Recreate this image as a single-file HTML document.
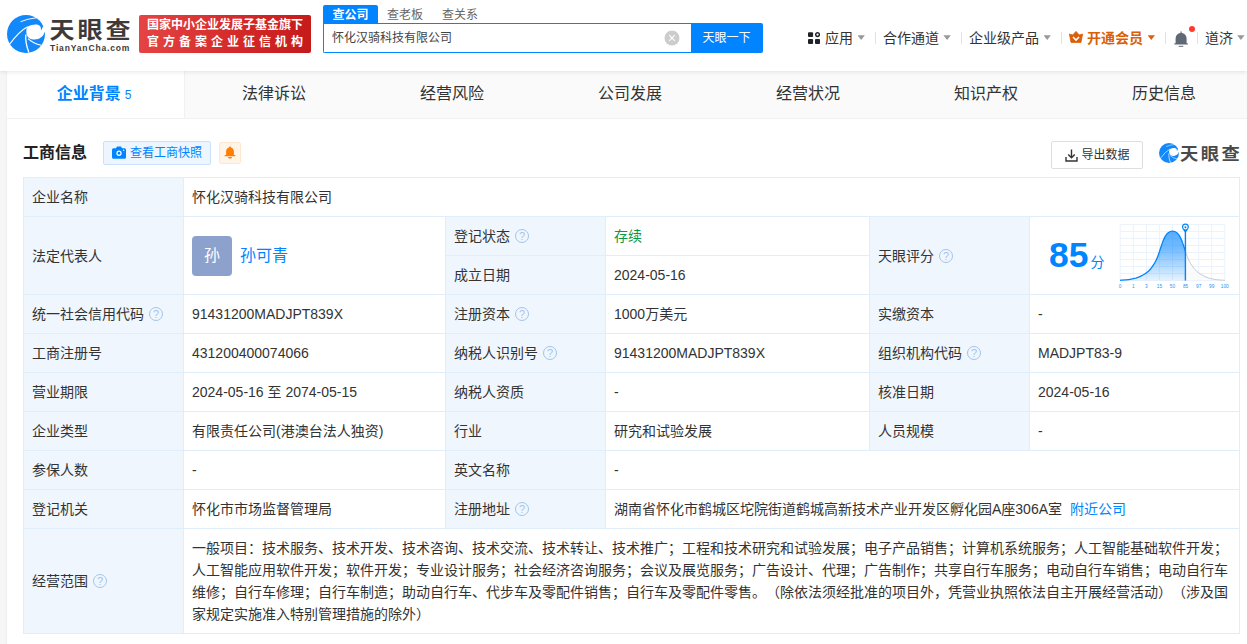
<!DOCTYPE html>
<html lang="zh-CN">
<head>
<meta charset="utf-8">
<title>怀化汉骑科技有限公司 - 天眼查</title>
<style>
*{box-sizing:border-box;margin:0;padding:0}
html,body{width:1247px;height:644px;overflow:hidden}
body{text-spacing-trim:space-all;background:#f6f6f6;font-family:"Liberation Sans","Noto Sans CJK SC",sans-serif;font-size:14px;color:#333;position:relative}
a{text-decoration:none;color:#0084ff}
.abs{position:absolute}
/* header */
#hd{position:absolute;left:0;top:0;width:1247px;height:71px;background:#fff;box-shadow:0 1px 4px rgba(0,0,0,.1);z-index:5}
#logo-ico{position:absolute;left:7px;top:15px;width:38px;height:38px}
#logo-cn{position:absolute;left:49.500px;top:12px;font-size:25px;line-height:36px;font-weight:700;color:#3e3a39;letter-spacing:3px;white-space:nowrap;transform:scaleY(.9);transform-origin:0 50%}
#logo-en{position:absolute;left:50px;top:42.500px;font-size:8.500px;line-height:10px;font-weight:700;color:#3e3a39;letter-spacing:.85px;white-space:nowrap}
#badge{position:absolute;left:139px;top:15px;width:172px;height:38px;border-radius:2px;background:linear-gradient(100deg,#e64545 0%,#d42a2a 55%,#c41a1a 100%);color:#fff;font-weight:700;font-size:12px;line-height:17px;padding:1.500px 0 0 8px;white-space:nowrap}
#badge .l2{letter-spacing:4px;display:block}
#stabs{position:absolute;left:323px;top:5px;height:17px;font-size:12px;line-height:20px;white-space:nowrap;color:#666}
#stabs span{position:absolute;top:0;height:17px}
#stabs .on{left:0;width:55px;height:18px;background:#0084ff;color:#fff;font-weight:700;text-align:center;border-radius:2px 2px 0 0}
#sbox{position:absolute;left:323px;top:23px;width:369px;height:30px;border:1px solid #0084ff;border-right:none;border-radius:0 0 0 2px;background:#fff;font-size:12px;line-height:29px;padding-left:8px;color:#444}
#sclr{position:absolute;left:664px;top:30px;width:16px;height:16px}
#sbtn{position:absolute;left:691px;top:23px;width:72px;height:30px;background:#0084ff;color:#fff;font-size:12px;line-height:30.500px;text-align:center;border-radius:0 2px 2px 0;padding-right:1px}
.nv{position:absolute;top:28px;height:21px;line-height:21px;font-size:14px;color:#333;white-space:nowrap}
.sep{position:absolute;top:32px;width:1px;height:12px;background:#dfe2e6}
.arr{position:absolute;top:35.3px;width:7.4px;height:4.6px;background:#999;clip-path:polygon(0 0,100% 0,50% 100%)}
/* tabs */
#wrap{position:absolute;left:7px;top:71px;width:1248px;height:600px;background:#fff;box-shadow:-1px 0 0 #efefef}
#tabs{position:absolute;left:0;top:0;width:1248px;height:48px;background:#fafafa;border-bottom:1px solid #f1f1f1}
.tab{position:absolute;top:0;height:47px;line-height:45px;font-size:16px;color:#333;text-align:center;width:178px}
.tab.on{background:#fff;color:#0084ff;font-weight:700;border-right:1px solid #f0f0f0;height:47px}
.tab.on small{font-size:12px;font-weight:400;margin-left:4px}
/* section head */
#ttl{position:absolute;left:16px;top:69.500px;font-size:16px;line-height:24px;font-weight:700;color:#222}
#snap{position:absolute;left:96px;top:70px;width:108px;height:24px;border:1px solid #c9e1fd;background:#edf5ff;border-radius:2px;color:#0084ff;font-size:12px;line-height:22.500px;padding-left:26px;white-space:nowrap}
#snap svg{position:absolute;left:8px;top:4px}
#bell{position:absolute;left:212px;top:71px;width:22px;height:22px;border:1px solid #ffe6cc;background:#fff4e8;border-radius:2.500px}
#exp{position:absolute;left:1044px;top:70px;width:92px;height:28px;border:1px solid #dedede;border-radius:2px;font-size:12px;line-height:27px;color:#333;padding-left:29.5px;white-space:nowrap;background:#fff}
#wm{position:absolute;left:1152px;top:70px;width:82px;height:24px}
/* table */
table{position:absolute;left:16px;top:106px;width:1216px;border-collapse:collapse;table-layout:fixed;font-size:14px;color:#333}
td{border:1px solid #e0edfa;height:39px;padding:0 8px;vertical-align:middle;line-height:22px;white-space:nowrap;overflow:hidden}
td.k{background:#f0f6fd}
.q{display:inline-block;width:14px;height:14px;border:1px solid #a4c4ea;border-radius:50%;color:#a4c4ea;font-size:11px;font-style:normal;line-height:12.500px;text-align:center;vertical-align:1px;margin-left:5px;font-family:"Liberation Sans",sans-serif}
.green{color:#089944}
#score{padding:0}
#sc{display:block}
#scope{white-space:normal;line-height:22px;padding:8px 8px 8px 8px}
.ava{display:inline-block;width:40px;height:40px;border-radius:4px;background:#8ca2cd;color:#fff;font-size:16px;line-height:40px;text-align:center;vertical-align:middle;margin-right:8px}
.nm{font-size:16px;color:#0084ff;vertical-align:middle}
</style>
</head>
<body>
<div id="hd">
  <svg id="logo-ico" viewBox="0 0 38 38">
    <circle cx="19" cy="19" r="19" fill="#1388fa"/>
    <path d="M20.100 11.900C24 9.800 28 9.200 31 9.800C33.500 10.500 34.400 13 33.800 15.700Q35.200 13.800 36 11.500L40 11L40 17.200L37.600 17.100C36.500 22 31 25.800 24.700 24.200C22.500 23.600 21 22.500 20.300 21C19 18.500 19 15 20.100 11.900Z" fill="#fff"/>
    <path d="M20.600 11.700Q12.100 16.200 2.800 29" fill="none" stroke="#fff" stroke-width="1.200"/>
    <path d="M18.900 19.500C18.300 24.700 19 30 21.900 37.600" fill="none" stroke="#fff" stroke-width="1.300"/>
    <path d="M21 23.600Q26.200 28.600 34.200 30.300" fill="none" stroke="#fff" stroke-width="1.100"/>
    <path d="M13.600 6.700Q20.200 3.700 30.200 2.700" fill="none" stroke="#fff" stroke-width=".95"/>
  </svg>
  <div id="logo-cn">天眼查</div>
  <div id="logo-en">TianYanCha.com</div>
  <div id="badge">国家中小企业发展子基金旗下<span class="l2">官方备案企业征信机构</span></div>
  <div id="stabs"><span class="on">查公司</span><span style="left:64px">查老板</span><span style="left:119px">查关系</span></div>
  <div id="sbox">怀化汉骑科技有限公司</div>
  <svg id="sclr" viewBox="0 0 16 16"><circle cx="8" cy="8" r="7.5" fill="#ccc"/><path d="M5.2 5.2L10.8 10.8M10.8 5.2L5.2 10.8" stroke="#fff" stroke-width="1.1"/></svg>
  <div id="sbtn">天眼一下</div>

  <svg class="abs" style="left:808px;top:32px" width="12.200" height="12" viewBox="0 0 12.200 12"><rect x="0" y=".2" width="5.100" height="4.700" rx="1" fill="#1f2329"/><rect x="0" y="7" width="5.100" height="4.900" rx="1" fill="#1f2329"/><rect x="7" y="7" width="5.100" height="4.900" rx="1" fill="#1f2329"/><circle cx="9.550" cy="2.600" r="1.850" fill="none" stroke="#1f2329" stroke-width="1.400"/></svg>
  <div class="nv" style="left:825px">应用</div><i class="arr" style="left:857.5px"></i>
  <i class="sep" style="left:875px"></i>
  <div class="nv" style="left:883px">合作通道</div><i class="arr" style="left:943.4px"></i>
  <i class="sep" style="left:961px"></i>
  <div class="nv" style="left:969px">企业级产品</div><i class="arr" style="left:1043.5px"></i>
  <i class="sep" style="left:1061px"></i>
  <svg class="abs" style="left:1069px;top:31.200px" width="14" height="12" viewBox="0 0 14 12"><path d="M.4 3L3.700 4 7 .4 10.300 4 13.600 3 12 11.400H2Z" fill="#d9600b" stroke="#d9600b" stroke-width=".8" stroke-linejoin="round"/><path d="M4 6L7 9.100 10 6" fill="none" stroke="#fff" stroke-width="1.500"/></svg>
  <div class="nv" style="left:1087px;color:#d9600b;font-weight:700">开通会员</div><i class="arr" style="left:1147.6px;background:#d9600b"></i>
  <i class="sep" style="left:1165px"></i>
  <svg class="abs" style="left:1174.300px;top:30.700px" width="14" height="16.500" viewBox="0 0 14 16.500"><path d="M7.100 .3Q7.700 .3 7.700 .9V2C10.600 2.400 12.600 4.600 12.600 7.400V12.200H13.500Q13.900 12.200 13.900 12.800Q13.900 13.400 13.500 13.400H.7Q.3 13.400 .3 12.800Q.3 12.200 .7 12.200H1.600V7.400C1.600 4.600 3.600 2.400 6.500 2V.9Q6.500 .3 7.100 .3Z" fill="#5f6875"/><rect x="4.700" y="14.700" width="4.600" height="1.300" rx=".3" fill="#7f8791"/></svg>
  <i class="abs" style="left:1189px;top:25.900px;width:6px;height:6px;border-radius:50%;background:#ff3b30"></i>
  <i class="sep" style="left:1197px"></i>
  <div class="nv" style="left:1205px">道济</div><i class="arr" style="left:1237.2px"></i>
</div>

<div id="wrap">
  <div id="tabs">
    <div class="tab on" style="left:0;width:178px;padding-right:3px">企业背景<small>5</small></div>
    <div class="tab" style="left:178px">法律诉讼</div>
    <div class="tab" style="left:356px">经营风险</div>
    <div class="tab" style="left:534px">公司发展</div>
    <div class="tab" style="left:712px">经营状况</div>
    <div class="tab" style="left:890px">知识产权</div>
    <div class="tab" style="left:1068px">历史信息</div>
  </div>

  <div id="ttl">工商信息</div>
  <div id="snap"><svg width="14" height="12.800" viewBox="0 0 14 12" preserveAspectRatio="none"><path d="M1.500 2H4L5 .500H9L10 2H12.500A1.500 1.500 0 0 1 14 3.500V10.500A1.500 1.500 0 0 1 12.500 12H1.500A1.500 1.500 0 0 1 0 10.500V3.500A1.500 1.500 0 0 1 1.500 2Z" fill="#0084ff"/><circle cx="7" cy="6.800" r="2.600" fill="#fff"/><circle cx="7" cy="6.800" r="1.300" fill="#0084ff"/><circle cx="11.700" cy="4" r=".7" fill="#fff"/></svg>查看工商快照</div>
  <div id="bell"><svg width="20" height="20" viewBox="0 0 20 20"><path d="M10 3.600C10.600 3.600 11 4 11 4.500C12.800 5 13.900 6.600 13.900 8.600V12.100H15.100Q15.400 12.100 15.400 12.600Q15.400 13.200 15.100 13.200H4.900Q4.600 13.200 4.600 12.600Q4.600 12.100 4.900 12.100H6.100V8.600C6.100 6.600 7.200 5 9 4.500C9 4 9.400 3.600 10 3.600Z" fill="#ff7d00"/><path d="M8 13.900H12A2 1.600 0 0 1 8 13.900Z" fill="#ff7d00"/></svg></div>
  <div id="exp"><svg class="abs" style="left:12.500px;top:6.500px" width="13" height="13" viewBox="0 0 13 13" fill="none" stroke="#333" stroke-width="1.400"><path d="M6.500 .500V8.500M3.200 5.500L6.500 8.700 9.800 5.500M1 8V12H12V8"/></svg>导出数据</div>
  <div id="wm">
    <svg class="abs" style="left:0;top:2px" width="20" height="20" viewBox="0 0 38 38">
      <circle cx="19" cy="19" r="19" fill="#1388fa"/>
    <path d="M20.100 11.900C24 9.800 28 9.200 31 9.800C33.500 10.500 34.400 13 33.800 15.700Q35.200 13.800 36 11.500L40 11L40 17.200L37.600 17.100C36.500 22 31 25.800 24.700 24.200C22.500 23.600 21 22.500 20.300 21C19 18.500 19 15 20.100 11.900Z" fill="#fff"/>
    <path d="M20.600 11.700Q12.100 16.200 2.800 29" fill="none" stroke="#fff" stroke-width="1.200"/>
    <path d="M18.900 19.500C18.300 24.700 19 30 21.900 37.600" fill="none" stroke="#fff" stroke-width="1.300"/>
    <path d="M21 23.600Q26.200 28.600 34.200 30.300" fill="none" stroke="#fff" stroke-width="1.100"/>
    <path d="M13.600 6.700Q20.200 3.700 30.200 2.700" fill="none" stroke="#fff" stroke-width=".95"/>
    </svg>
    <span class="abs" style="left:21px;top:2px;font-size:17px;line-height:24px;font-weight:700;color:#4a4a4a;white-space:nowrap;letter-spacing:2.300px;transform:scaleX(1.075);transform-origin:0 0">天眼查</span>
  </div>

  <table>
    <colgroup><col style="width:160px"><col style="width:262px"><col style="width:160px"><col style="width:264px"><col style="width:160px"><col style="width:210px"></colgroup>
    <tr><td class="k">企业名称</td><td colspan="5">怀化汉骑科技有限公司</td></tr>
    <tr><td class="k" rowspan="2">法定代表人</td><td rowspan="2"><span class="ava">孙</span><a class="nm">孙可青</a></td><td class="k">登记状态<i class="q">?</i></td><td class="green">存续</td><td class="k" rowspan="2">天眼评分<i class="q">?</i></td><td rowspan="2" id="score"><svg id="sc" width="208" height="76" viewBox="0 0 208 76">
<defs><linearGradient id="g1" x1="0" y1="0" x2="0" y2="1"><stop offset="0" stop-color="#0084ff" stop-opacity=".66"/><stop offset=".35" stop-color="#0084ff" stop-opacity=".55"/><stop offset="1" stop-color="#0084ff" stop-opacity=".1"/></linearGradient>
<clipPath id="cl"><rect x="80" y="0" width="75.400" height="76"/></clipPath><clipPath id="cr"><rect x="155.400" y="0" width="60" height="76"/></clipPath></defs>
<text x="19" y="49.300" font-family="Liberation Sans,sans-serif" font-size="35.400" font-weight="700" fill="#0084ff">85</text>
<text x="60.500" y="49" font-family="Liberation Sans,Noto Sans CJK SC,sans-serif" font-size="14" fill="#0084ff">分</text>
<path d="M90.2 6.4V62.5M103.3 6.4V62.5M116.4 6.4V62.5M129.4 6.4V62.5M142.5 6.4V62.5M155.6 6.4V62.5M168.7 6.4V62.5M181.7 6.4V62.5M194.8 6.4V62.5M90.2 6.4H194.8M90.2 13.4H194.8M90.2 20.4H194.8M90.2 27.4H194.8M90.2 34.5H194.8M90.2 41.5H194.8M90.2 48.5H194.8M90.2 55.5H194.8M90.2 62.5H194.8" stroke="#eaf2fb" stroke-width="1" fill="none"/>
<g clip-path="url(#cr)"><path d="M90.0 62.3 C91.5 62.2 96.3 62.0 98.9 61.6 C101.6 61.3 103.8 60.8 105.9 60.2 C108.1 59.5 110.0 58.6 111.8 57.7 C113.6 56.7 115.3 55.7 116.8 54.5 C118.3 53.3 119.5 52.2 120.8 50.7 C122.0 49.2 123.3 47.3 124.3 45.7 C125.3 44.0 126.1 42.5 126.8 40.8 C127.5 39.2 128.1 37.6 128.7 35.8 C129.4 34.0 130.0 31.8 130.7 29.8 C131.4 27.8 132.0 25.8 132.7 23.9 C133.5 22.0 134.3 19.9 135.2 18.4 C136.1 16.9 137.0 15.6 138.2 14.7 C139.4 13.8 141.1 13.2 142.5 13.2 C143.9 13.2 145.6 13.8 146.8 14.7 C148.0 15.6 148.9 16.9 149.8 18.4 C150.7 19.9 151.5 22.0 152.3 23.9 C153.0 25.8 153.6 27.8 154.3 29.8 C155.0 31.8 155.6 34.0 156.3 35.8 C156.9 37.6 157.5 39.2 158.2 40.8 C158.9 42.5 159.7 44.0 160.7 45.7 C161.7 47.3 163.0 49.2 164.2 50.7 C165.5 52.2 166.7 53.3 168.2 54.5 C169.7 55.7 171.4 56.7 173.2 57.7 C175.0 58.6 176.9 59.5 179.1 60.2 C181.2 60.8 183.4 61.3 186.1 61.6 C188.7 62.0 193.5 62.2 195.0 62.3 Z" fill="#fafafa" fill-opacity=".8"/><path d="M90.0 62.3 C91.5 62.2 96.3 62.0 98.9 61.6 C101.6 61.3 103.8 60.8 105.9 60.2 C108.1 59.5 110.0 58.6 111.8 57.7 C113.6 56.7 115.3 55.7 116.8 54.5 C118.3 53.3 119.5 52.2 120.8 50.7 C122.0 49.2 123.3 47.3 124.3 45.7 C125.3 44.0 126.1 42.5 126.8 40.8 C127.5 39.2 128.1 37.6 128.7 35.8 C129.4 34.0 130.0 31.8 130.7 29.8 C131.4 27.8 132.0 25.8 132.7 23.9 C133.5 22.0 134.3 19.9 135.2 18.4 C136.1 16.9 137.0 15.6 138.2 14.7 C139.4 13.8 141.1 13.2 142.5 13.2 C143.9 13.2 145.6 13.8 146.8 14.7 C148.0 15.6 148.9 16.9 149.8 18.4 C150.7 19.9 151.5 22.0 152.3 23.9 C153.0 25.8 153.6 27.8 154.3 29.8 C155.0 31.8 155.6 34.0 156.3 35.8 C156.9 37.6 157.5 39.2 158.2 40.8 C158.9 42.5 159.7 44.0 160.7 45.7 C161.7 47.3 163.0 49.2 164.2 50.7 C165.5 52.2 166.7 53.3 168.2 54.5 C169.7 55.7 171.4 56.7 173.2 57.7 C175.0 58.6 176.9 59.5 179.1 60.2 C181.2 60.8 183.4 61.3 186.1 61.6 C188.7 62.0 193.5 62.2 195.0 62.3" fill="none" stroke="#c4cbd3" stroke-width="1"/></g>
<g clip-path="url(#cl)"><path d="M90.0 62.3 C91.5 62.2 96.3 62.0 98.9 61.6 C101.6 61.3 103.8 60.8 105.9 60.2 C108.1 59.5 110.0 58.6 111.8 57.7 C113.6 56.7 115.3 55.7 116.8 54.5 C118.3 53.3 119.5 52.2 120.8 50.7 C122.0 49.2 123.3 47.3 124.3 45.7 C125.3 44.0 126.1 42.5 126.8 40.8 C127.5 39.2 128.1 37.6 128.7 35.8 C129.4 34.0 130.0 31.8 130.7 29.8 C131.4 27.8 132.0 25.8 132.7 23.9 C133.5 22.0 134.3 19.9 135.2 18.4 C136.1 16.9 137.0 15.6 138.2 14.7 C139.4 13.8 141.1 13.2 142.5 13.2 C143.9 13.2 145.6 13.8 146.8 14.7 C148.0 15.6 148.9 16.9 149.8 18.4 C150.7 19.9 151.5 22.0 152.3 23.9 C153.0 25.8 153.6 27.8 154.3 29.8 C155.0 31.8 155.6 34.0 156.3 35.8 C156.9 37.6 157.5 39.2 158.2 40.8 C158.9 42.5 159.7 44.0 160.7 45.7 C161.7 47.3 163.0 49.2 164.2 50.7 C165.5 52.2 166.7 53.3 168.2 54.5 C169.7 55.7 171.4 56.7 173.2 57.7 C175.0 58.6 176.9 59.5 179.1 60.2 C181.2 60.8 183.4 61.3 186.1 61.6 C188.7 62.0 193.5 62.2 195.0 62.3 Z" fill="url(#g1)"/><path d="M90.0 62.3 C91.5 62.2 96.3 62.0 98.9 61.6 C101.6 61.3 103.8 60.8 105.9 60.2 C108.1 59.5 110.0 58.6 111.8 57.7 C113.6 56.7 115.3 55.7 116.8 54.5 C118.3 53.3 119.5 52.2 120.8 50.7 C122.0 49.2 123.3 47.3 124.3 45.7 C125.3 44.0 126.1 42.5 126.8 40.8 C127.5 39.2 128.1 37.6 128.7 35.8 C129.4 34.0 130.0 31.8 130.7 29.8 C131.4 27.8 132.0 25.8 132.7 23.9 C133.5 22.0 134.3 19.9 135.2 18.4 C136.1 16.9 137.0 15.6 138.2 14.7 C139.4 13.8 141.1 13.2 142.5 13.2 C143.9 13.2 145.6 13.8 146.8 14.7 C148.0 15.6 148.9 16.9 149.8 18.4 C150.7 19.9 151.5 22.0 152.3 23.9 C153.0 25.8 153.6 27.8 154.3 29.8 C155.0 31.8 155.6 34.0 156.3 35.8 C156.9 37.6 157.5 39.2 158.2 40.8 C158.9 42.5 159.7 44.0 160.7 45.7 C161.7 47.3 163.0 49.2 164.2 50.7 C165.5 52.2 166.7 53.3 168.2 54.5 C169.7 55.7 171.4 56.7 173.2 57.7 C175.0 58.6 176.9 59.5 179.1 60.2 C181.2 60.8 183.4 61.3 186.1 61.6 C188.7 62.0 193.5 62.2 195.0 62.3" fill="none" stroke="#0084ff" stroke-width="1.300"/></g>
<path d="M155.400 13V62.600" stroke="#0084ff" stroke-width="1.400"/>
<path d="M155.400 15.200C154.400 13 151.900 11.400 151.900 9.100a3.500 3.500 0 0 1 7 0C158.900 11.400 156.400 13 155.400 15.200Z" fill="#0084ff"/>
<circle cx="155.400" cy="9.100" r="2.300" fill="#fff"/><circle cx="155.400" cy="9.200" r="1.050" fill="#0084ff"/>
<g transform="translate(0 70) scale(.5)" font-family="Liberation Sans,sans-serif" font-size="9.500" fill="#2b92fb"><text x="180.4" y="0" text-anchor="middle">0</text><text x="206.6" y="0" text-anchor="middle">1</text><text x="232.7" y="0" text-anchor="middle">3</text><text x="258.9" y="0" text-anchor="middle">15</text><text x="285.0" y="0" text-anchor="middle">50</text><text x="311.1" y="0" text-anchor="middle">85</text><text x="337.3" y="0" text-anchor="middle">97</text><text x="363.5" y="0" text-anchor="middle">99</text><text x="389.6" y="0" text-anchor="middle">100</text></g>
</svg></td></tr>
    <tr><td class="k">成立日期</td><td>2024-05-16</td></tr>
    <tr><td class="k">统一社会信用代码<i class="q">?</i></td><td>91431200MADJPT839X</td><td class="k">注册资本<i class="q">?</i></td><td>1000万美元</td><td class="k">实缴资本</td><td>-</td></tr>
    <tr><td class="k">工商注册号</td><td>431200400074066</td><td class="k">纳税人识别号<i class="q">?</i></td><td>91431200MADJPT839X</td><td class="k">组织机构代码<i class="q">?</i></td><td>MADJPT83-9</td></tr>
    <tr><td class="k">营业期限</td><td>2024-05-16 至 2074-05-15</td><td class="k">纳税人资质</td><td>-</td><td class="k">核准日期</td><td>2024-05-16</td></tr>
    <tr><td class="k">企业类型</td><td>有限责任公司(港澳台法人独资)</td><td class="k">行业</td><td>研究和试验发展</td><td class="k">人员规模</td><td>-</td></tr>
    <tr><td class="k">参保人数</td><td>-</td><td class="k">英文名称</td><td colspan="3">-</td></tr>
    <tr><td class="k">登记机关</td><td>怀化市市场监督管理局</td><td class="k">注册地址<i class="q">?</i></td><td colspan="3">湖南省怀化市鹤城区坨院街道鹤城高新技术产业开发区孵化园A座306A室 <a style="margin-left:4px">附近公司</a></td></tr>
    <tr><td class="k">经营范围<i class="q">?</i></td><td colspan="5" id="scope">一般项目：技术服务、技术开发、技术咨询、技术交流、技术转让、技术推广；工程和技术研究和试验发展；电子产品销售；计算机系统服务；人工智能基础软件开发；人工智能应用软件开发；软件开发；专业设计服务；社会经济咨询服务；会议及展览服务；广告设计、代理；广告制作；共享自行车服务；电动自行车销售；电动自行车维修；自行车修理；自行车制造；助动自行车、代步车及零配件销售；自行车及零配件零售。（除依法须经批准的项目外，凭营业执照依法自主开展经营活动）（涉及国家规定实施准入特别管理措施的除外）</td></tr>
  </table>
</div>
</body>
</html>
